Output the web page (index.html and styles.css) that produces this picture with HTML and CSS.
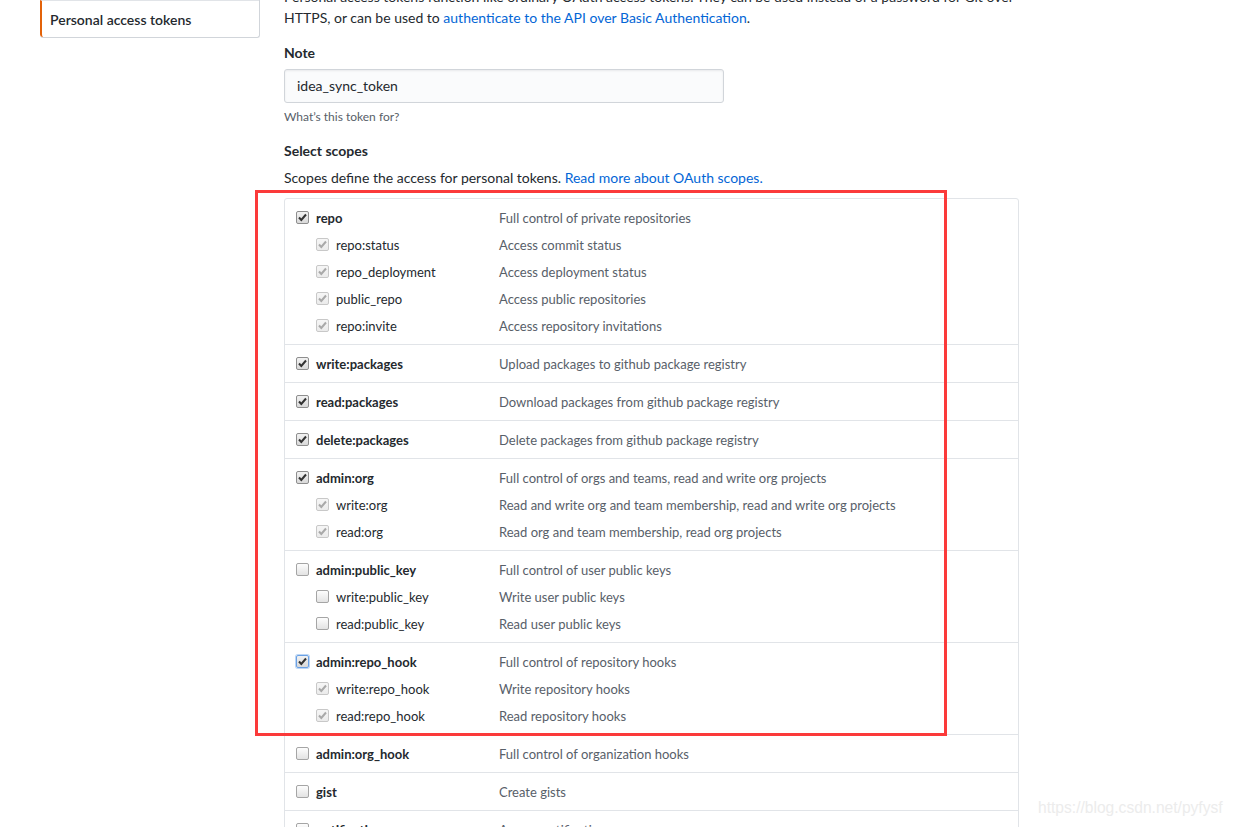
FILE: index.html
```html
<!DOCTYPE html>
<html lang="en">
<head>
<meta charset="utf-8">
<title>Personal access tokens</title>
<link rel="stylesheet" href="styles.css">
</head>
<body>
<div class="page">
  <aside class="sidebar">
    <nav class="menu">
      <a class="menu-item selected" href="#">Personal access tokens</a>
    </nav>
  </aside>
  <main class="main">
    <p class="intro">Personal access tokens function like ordinary OAuth access tokens. They can be used instead of a password for Git over<br>HTTPS, or can be used to <a href="#">authenticate to the API over Basic Authentication</a>.</p>

    <div class="form-group">
      <label class="form-label" for="note">Note</label>
      <input class="form-control" id="note" type="text" value="idea_sync_token">
      <p class="note">What’s this token for?</p>
    </div>

    <div class="form-group scopes-group">
      <div class="form-label">Select scopes</div>
      <p class="scopes-desc">Scopes define the access for personal tokens. <a href="#">Read more about OAuth scopes.</a></p>

      <div class="scope-list">
        <div class="scope-group">
          <div class="scope-row top"><span class="scope-label"><span class="cb checked"></span>repo</span><span class="scope-desc">Full control of private repositories</span></div>
          <div class="scope-row sub"><span class="scope-label"><span class="cb disabled"></span>repo:status</span><span class="scope-desc">Access commit status</span></div>
          <div class="scope-row sub"><span class="scope-label"><span class="cb disabled"></span>repo_deployment</span><span class="scope-desc">Access deployment status</span></div>
          <div class="scope-row sub"><span class="scope-label"><span class="cb disabled"></span>public_repo</span><span class="scope-desc">Access public repositories</span></div>
          <div class="scope-row sub"><span class="scope-label"><span class="cb disabled"></span>repo:invite</span><span class="scope-desc">Access repository invitations</span></div>
        </div>
        <div class="scope-group">
          <div class="scope-row top"><span class="scope-label"><span class="cb checked"></span>write:packages</span><span class="scope-desc">Upload packages to github package registry</span></div>
        </div>
        <div class="scope-group">
          <div class="scope-row top"><span class="scope-label"><span class="cb checked"></span>read:packages</span><span class="scope-desc">Download packages from github package registry</span></div>
        </div>
        <div class="scope-group">
          <div class="scope-row top"><span class="scope-label"><span class="cb checked"></span>delete:packages</span><span class="scope-desc">Delete packages from github package registry</span></div>
        </div>
        <div class="scope-group">
          <div class="scope-row top"><span class="scope-label"><span class="cb checked"></span>admin:org</span><span class="scope-desc">Full control of orgs and teams, read and write org projects</span></div>
          <div class="scope-row sub"><span class="scope-label"><span class="cb disabled"></span>write:org</span><span class="scope-desc">Read and write org and team membership, read and write org projects</span></div>
          <div class="scope-row sub"><span class="scope-label"><span class="cb disabled"></span>read:org</span><span class="scope-desc">Read org and team membership, read org projects</span></div>
        </div>
        <div class="scope-group">
          <div class="scope-row top"><span class="scope-label"><span class="cb"></span>admin:public_key</span><span class="scope-desc">Full control of user public keys</span></div>
          <div class="scope-row sub"><span class="scope-label"><span class="cb"></span>write:public_key</span><span class="scope-desc">Write user public keys</span></div>
          <div class="scope-row sub"><span class="scope-label"><span class="cb"></span>read:public_key</span><span class="scope-desc">Read user public keys</span></div>
        </div>
        <div class="scope-group">
          <div class="scope-row top"><span class="scope-label"><span class="cb checked focused"></span>admin:repo_hook</span><span class="scope-desc">Full control of repository hooks</span></div>
          <div class="scope-row sub"><span class="scope-label"><span class="cb disabled"></span>write:repo_hook</span><span class="scope-desc">Write repository hooks</span></div>
          <div class="scope-row sub"><span class="scope-label"><span class="cb disabled"></span>read:repo_hook</span><span class="scope-desc">Read repository hooks</span></div>
        </div>
        <div class="scope-group">
          <div class="scope-row top"><span class="scope-label"><span class="cb"></span>admin:org_hook</span><span class="scope-desc">Full control of organization hooks</span></div>
        </div>
        <div class="scope-group">
          <div class="scope-row top"><span class="scope-label"><span class="cb"></span>gist</span><span class="scope-desc">Create gists</span></div>
        </div>
        <div class="scope-group">
          <div class="scope-row top"><span class="scope-label"><span class="cb"></span>notifications</span><span class="scope-desc">Access notifications</span></div>
        </div>
      </div>
    </div>
  </main>
</div>
<div class="annotation"></div>
<div class="watermark">https://blog.csdn.net/pyfysf</div>
</body>
</html>
```

FILE: styles.css
```css
html, body {
  margin: 0;
  padding: 0;
  background: #fff;
  overflow: hidden;
  height: 827px;
}
body {
  font-family: Lato, "Open Sans", sans-serif;
  font-size: 14px;
  line-height: 21px;
  color: #24292e;
  position: relative;
}
a { color: #0366d6; text-decoration: none; }
p { margin: 0; }

.page {
  display: flex;
  gap: 24px;
  padding-left: 40px;
}

.sidebar { width: 220px; flex: none; }
.menu {
  border: 1px solid #d1d5da;
  border-top: 0;
  border-left: 0;
  border-radius: 0 0 3px 3px;
  background: #fff;
}
.menu-item {
  display: block;
  border-top: 1px solid #e1e4e8;
  border-left: 2px solid #e36209;
  padding: 8px 8px 7px;
  color: #24292e;
  font-weight: 600;
  border-bottom-left-radius: 3px;
}

.main { width: 735px; flex: none; margin-top: -14px; }
.intro { white-space: nowrap; }

.form-group { margin-top: 14px; }
.form-label {
  display: block;
  font-weight: 700;
  margin-bottom: 6px;
}
.form-control {
  display: block;
  box-sizing: border-box;
  width: 440px;
  height: 34px;
  padding: 5px 12px 7px;
  font: inherit;
  color: #24292e;
  background: #fafbfc;
  border: 1px solid #d1d5da;
  border-radius: 3px;
  box-shadow: inset 0 1px 2px rgba(27,31,35,0.075);
  outline: none;
}
.note {
  margin-top: 5px;
  font-size: 12px;
  line-height: 18px;
  color: #586069;
}
.scopes-group { margin-top: 14px; }
.scopes-group .form-label { margin-bottom: 6px; }
.scopes-desc { margin-bottom: 10px; }

.scope-list {
  border: 1px solid #e1e4e8;
  border-radius: 3px;
  font-size: 13px;
}
.scope-group {
  padding: 6px 11px 4px;
  border-bottom: 1px solid #e1e4e8;
}
.scope-group:last-child { border-bottom: 0; }
.scope-row {
  display: grid;
  grid-template-columns: 203px 1fr;
  height: 27px;
  align-items: center;
}
.scope-label {
  display: flex;
  align-items: center;
}
.scope-row.top .scope-label { font-weight: 700; }
.scope-row.sub .scope-label { padding-left: 20px; }
.scope-desc { color: #586069; }

.cb {
  flex: none;
  box-sizing: border-box;
  width: 13px;
  height: 13px;
  margin-right: 7px;
  margin-top: -3px;
  border: 1px solid #a5a5a5;
  border-radius: 2px;
  background: linear-gradient(#fdfdfd, #e3e3e3);
  background-repeat: no-repeat;
  background-position: center;
}
.cb.checked {
  border-color: #8e8e8e;
  background-image: url("data:image/svg+xml,%3Csvg xmlns='http://www.w3.org/2000/svg' width='11' height='11'%3E%3Cpath d='M2 5.5 L4.3 8 L9 2.5' fill='none' stroke='%23333' stroke-width='2'/%3E%3C/svg%3E"), linear-gradient(#f2f2f2, #d9d9d9);
}
.cb.disabled {
  border-color: #c8c8c8;
  background-image: url("data:image/svg+xml,%3Csvg xmlns='http://www.w3.org/2000/svg' width='11' height='11'%3E%3Cpath d='M2 5.5 L4.3 8 L9 2.5' fill='none' stroke='%23a9a9a9' stroke-width='2'/%3E%3C/svg%3E"), linear-gradient(#f6f6f6, #ebebeb);
}
.cb.focused {
  border-color: #6aa0e4;
  box-shadow: 0 0 0 1px #bcd6f5;
}

.annotation {
  position: absolute;
  left: 255px;
  top: 190px;
  width: 692px;
  height: 546px;
  box-sizing: border-box;
  border: 3px solid #fb3a3a;
  pointer-events: none;
}
.watermark {
  position: absolute;
  left: 1038px;
  top: 797px;
  font-family: "Liberation Sans", Arial, sans-serif;
  font-size: 15.6px;
  line-height: 22px;
  color: #ececec;
  white-space: nowrap;
}
```
